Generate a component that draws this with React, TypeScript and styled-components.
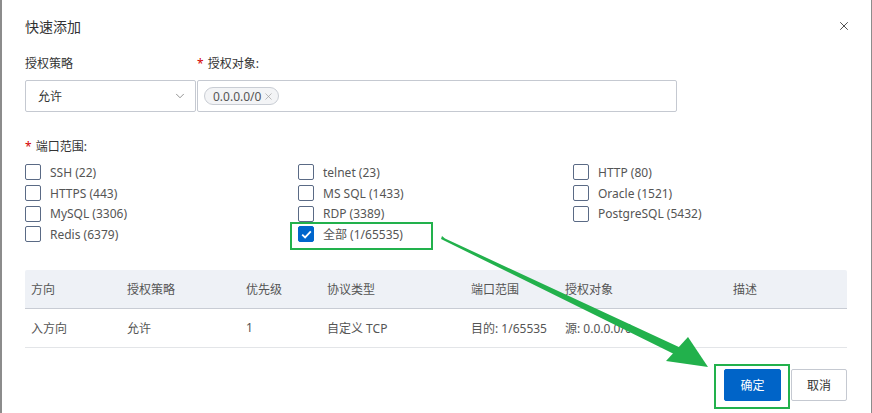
import React from 'react';
import styled, { createGlobalStyle } from 'styled-components';
import { ChevronDown, X } from 'lucide-react';

const GlobalStyle = createGlobalStyle`
  html, body {
    margin: 0;
    padding: 0;
    background: #ffffff;
  }
  body {
    font-family: "Noto Sans", "Noto Sans CJK SC", sans-serif;
    color: #333;
  }
`;

const PORTS = [
  { label: 'SSH (22)' },
  { label: 'telnet (23)' },
  { label: 'HTTP (80)' },
  { label: 'HTTPS (443)' },
  { label: 'MS SQL (1433)' },
  { label: 'Oracle (1521)' },
  { label: 'MySQL (3306)' },
  { label: 'RDP (3389)' },
  { label: 'PostgreSQL (5432)' },
  { label: 'Redis (6379)' },
  { label: '全部 (1/65535)', checked: true, highlight: true },
];

const COLUMNS = ['方向', '授权策略', '优先级', '协议类型', '端口范围', '授权对象', '描述'];
const ROW = ['入方向', '允许', '1', '自定义 TCP', '目的: 1/65535', '源: 0.0.0.0/0', ''];

const Dialog = styled.div`
  position: relative;
  width: 872px;
  height: 413px;
  box-sizing: border-box;
  border-left: 2px solid #8c8c8c;
  border-right: 1px solid #8c8c8c;
  padding: 0 24px 0 23px;
  overflow: hidden;
`;

const Header = styled.div`
  display: flex;
  align-items: center;
  justify-content: space-between;
  height: 52px;
`;

const Title = styled.div`
  font-size: 14px;
  color: #333;
`;

const CloseButton = styled.div`
  display: flex;
  color: #444;
  margin-right: -4px;
`;

const FormRow = styled.div`
  display: flex;
  gap: 1px;
  margin-top: 3px;
`;

const Field = styled.div<{ width: number }>`
  display: flex;
  flex-direction: column;
  width: ${p => p.width}px;
`;

const Label = styled.div`
  font-size: 12px;
  line-height: 18px;
  height: 18px;
  color: #333;
  margin-bottom: 7px;
  display: flex;
  align-items: center;
`;

const Star = styled.span`
  color: #d40000;
  margin-right: 4px;
  font-size: 12px;
`;

const SelectBox = styled.div`
  box-sizing: border-box;
  height: 32px;
  border: 1px solid #c5c9d1;
  border-radius: 2px;
  display: flex;
  align-items: center;
  justify-content: space-between;
  padding: 0 8px 0 12px;
  font-size: 12px;
  color: #333;
`;

const InputBox = styled(SelectBox)`
  justify-content: flex-start;
  padding-left: 6px;
`;

const Tag = styled.div`
  display: flex;
  align-items: center;
  gap: 2px;
  height: 18px;
  box-sizing: border-box;
  padding: 0 4px 0 8px;
  border: 1px solid #c9cdd4;
  border-radius: 9px;
  background: #f3f4f6;
  font-size: 12px;
  color: #555;
`;

const PortsLabel = styled(Label)`
  margin-top: 26px;
  margin-bottom: 6px;
`;

const PortGrid = styled.div`
  display: grid;
  grid-template-columns: 273px 275px 1fr;
  grid-auto-rows: 20.7px;
`;

const PortItem = styled.label`
  position: relative;
  display: flex;
  align-items: center;
  gap: 9px;
  font-size: 12px;
  color: #555;
`;

const Box = styled.span<{ checked?: boolean }>`
  box-sizing: border-box;
  width: 16px;
  height: 16px;
  border-radius: 2px;
  border: 1px solid ${p => (p.checked ? '#0066cc' : '#5a6a85')};
  background: ${p => (p.checked ? '#0066cc' : '#fff')};
  display: flex;
  align-items: center;
  justify-content: center;
`;

const Highlight = styled.span`
  position: absolute;
  left: -8px;
  top: -2px;
  width: 143px;
  height: 28px;
  border: 2px solid #22b14c;
  box-sizing: border-box;
  pointer-events: none;
`;

const Table = styled.div`
  margin-top: 25px;
  font-size: 12px;
  color: #555;
`;

const TableRow = styled.div<{ head?: boolean }>`
  display: grid;
  grid-template-columns: 96px 119px 81px 144px 94px 168px 1fr;
  align-items: center;
  height: 39px;
  box-sizing: border-box;
  padding-left: 6px;
  background: ${p => (p.head ? '#eef1f6' : '#fff')};
  border-bottom: 1px solid ${p => (p.head ? '#c8ccd4' : '#e3e5e8')};
  border-radius: ${p => (p.head ? '2px 2px 0 0' : '0')};
`;

const Cell = styled.div`
  white-space: nowrap;
`;

const Footer = styled.div`
  display: flex;
  justify-content: flex-end;
  gap: 10px;
  margin-top: 21px;
`;

const Button = styled.div<{ primary?: boolean }>`
  position: relative;
  box-sizing: border-box;
  height: 32px;
  width: ${p => (p.primary ? 57 : 56)}px;
  display: flex;
  align-items: center;
  justify-content: center;
  font-size: 12px;
  border-radius: 2px;
  background: ${p => (p.primary ? '#0064c8' : '#fff')};
  color: ${p => (p.primary ? '#fff' : '#333')};
  border: 1px solid ${p => (p.primary ? '#0064c8' : '#c5c9d1')};
`;

const ButtonHighlight = styled.span`
  position: absolute;
  left: -11px;
  top: -6px;
  width: 76px;
  height: 45px;
  border: 2px solid #22b14c;
  box-sizing: border-box;
`;

const Arrow = styled.svg`
  position: absolute;
  left: 0;
  top: 0;
  pointer-events: none;
`;

function Check() {
  return (
    <svg width="11" height="9" viewBox="0 0 11 9">
      <path d="M1.2 4.6 L4.1 7.4 L9.8 1.4" fill="none" stroke="#fff" strokeWidth="1.8" />
    </svg>
  );
}

export default function App() {
  return (
    <Dialog>
      <GlobalStyle />
      <Header>
        <Title>快速添加</Title>
        <CloseButton>
          <X size={14} strokeWidth={1.6} />
        </CloseButton>
      </Header>

      <FormRow>
        <Field width={171}>
          <Label>授权策略</Label>
          <SelectBox>
            <span>允许</span>
            <ChevronDown size={14} strokeWidth={1.2} color="#666" />
          </SelectBox>
        </Field>
        <Field width={480}>
          <Label>
            <Star>*</Star>授权对象:
          </Label>
          <InputBox>
            <Tag>
              0.0.0.0/0
              <X size={11} strokeWidth={1.4} color="#999" />
            </Tag>
          </InputBox>
        </Field>
      </FormRow>

      <PortsLabel>
        <Star>*</Star>端口范围:
      </PortsLabel>
      <PortGrid>
        {PORTS.map((item, index) => (
          <PortItem key={index}>
            <Box checked={item.checked}>{item.checked && <Check />}</Box>
            {item.label}
            {item.highlight && <Highlight />}
          </PortItem>
        ))}
      </PortGrid>

      <Table>
        <TableRow head>
          {COLUMNS.map(c => (
            <Cell key={c}>{c}</Cell>
          ))}
        </TableRow>
        <TableRow>
          {ROW.map((c, i) => (
            <Cell key={i}>{c}</Cell>
          ))}
        </TableRow>
      </Table>

      <Footer>
        <Button primary>
          确定
          <ButtonHighlight />
        </Button>
        <Button>取消</Button>
      </Footer>

      <Arrow width="872" height="413" viewBox="0 0 872 413">
        <polygon points="440,236 443,238.5 679,348 674,355 439,239" fill="#22b14c" />
        <polygon points="686,337 706,367 664,361" fill="#22b14c" />
      </Arrow>
    </Dialog>
  );
}
